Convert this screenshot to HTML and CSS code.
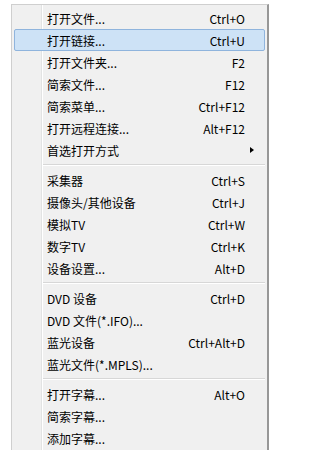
FILE: index.html
```html
<!DOCTYPE html>
<html lang="zh-CN">
<head>
    <meta charset="UTF-8">
    <meta name="viewport" content="width=device-width, initial-scale=1.0">
    <title>打开菜单</title>
    <link rel="stylesheet" href="styles.css">
</head>
<body>
    <div class="menu">
        <div class="item"><span class="label">打开文件...</span><span class="key">Ctrl+O</span></div>
        <div class="item active"><span class="label">打开链接...</span><span class="key">Ctrl+U</span></div>
        <div class="item"><span class="label">打开文件夹...</span><span class="key">F2</span></div>
        <div class="item"><span class="label">简索文件...</span><span class="key">F12</span></div>
        <div class="item"><span class="label">简索菜单...</span><span class="key">Ctrl+F12</span></div>
        <div class="item"><span class="label">打开远程连接...</span><span class="key">Alt+F12</span></div>
        <div class="item"><span class="label">首选打开方式</span><span class="arrow"></span></div>
        <div class="separator"></div>
        <div class="item"><span class="label">采集器</span><span class="key">Ctrl+S</span></div>
        <div class="item"><span class="label">摄像头/其他设备</span><span class="key">Ctrl+J</span></div>
        <div class="item"><span class="label">模拟TV</span><span class="key">Ctrl+W</span></div>
        <div class="item"><span class="label">数字TV</span><span class="key">Ctrl+K</span></div>
        <div class="item"><span class="label">设备设置...</span><span class="key">Alt+D</span></div>
        <div class="separator"></div>
        <div class="item"><span class="label">DVD 设备</span><span class="key">Ctrl+D</span></div>
        <div class="item"><span class="label">DVD 文件(*.IFO)...</span></div>
        <div class="item"><span class="label">蓝光设备</span><span class="key">Ctrl+Alt+D</span></div>
        <div class="item"><span class="label">蓝光文件(*.MPLS)...</span></div>
        <div class="separator"></div>
        <div class="item"><span class="label">打开字幕...</span><span class="key">Alt+O</span></div>
        <div class="item"><span class="label">简索字幕...</span></div>
        <div class="item"><span class="label">添加字幕...</span></div>
    </div>
</body>
</html>
```

FILE: styles.css
```css
body {
    margin: 0;
    padding: 0;
    background-color: #fff;
    font-family: "Noto Sans CJK SC", "Noto Sans", sans-serif;
    font-size: 12px;
    color: #000;
    overflow: hidden;
}
.menu {
    width: 255px;
    margin: 4px 0 0 11px;
    padding: 2px 0 20px 0;
    background-color: #f0f0f0;
    background-image: linear-gradient(to right, transparent 29px, #e2e3e3 29px, #e2e3e3 30px, #fff 30px, #fff 31px, transparent 31px);
    border: 1px solid #cfcfcf;
    border-right: 2px solid #979797;
}
.item {
    height: 22px;
    margin: 0 2px;
    padding: 0 19px 0 32px;
    display: flex;
    align-items: center;
    justify-content: space-between;
    box-sizing: border-box;
    border: 1px solid transparent;
    border-radius: 2px;
}
.item.active {
    background-color: #cde2f6;
    border-color: #8fb4dd;
}
.label {
    white-space: nowrap;
}
.key {
    white-space: nowrap;
}
.arrow {
    width: 0;
    height: 0;
    margin-right: -9px;
    border-top: 3.5px solid transparent;
    border-bottom: 3.5px solid transparent;
    border-left: 4px solid #000;
}
.separator {
    height: 8px;
    margin: 0 2px 0 31px;
    padding-top: 3px;
    box-sizing: border-box;
}
.separator::after {
    content: "";
    display: block;
    height: 1px;
    background-color: #d7d7d7;
    border-bottom: 1px solid #fff;
}
```
